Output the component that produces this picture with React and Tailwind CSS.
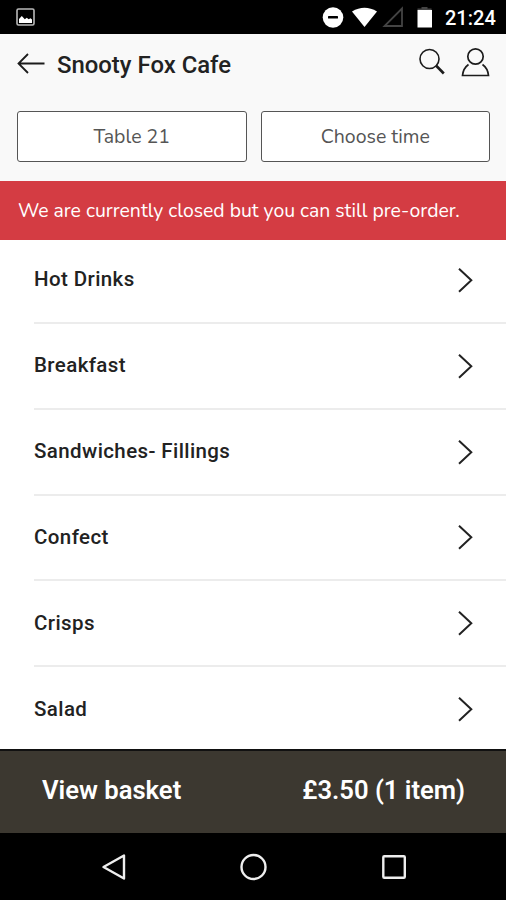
const categories = ['Hot Drinks', 'Breakfast', 'Sandwiches- Fillings', 'Confect', 'Crisps', 'Salad'];

function StatusBar() {
  return (
    <div className="h-[34px] shrink-0 bg-black text-white flex items-center pl-[16px] pr-[11px]">
      <svg width="19" height="18" viewBox="0 0 19 18" fill="none">
        <rect x="1" y="1" width="17" height="16" rx="1.5" stroke="#b9b9b9" strokeWidth="1.6" />
        <path d="M3 15V11l2.800-3 3 3.200 2-1.400 1.800 1.400 2-1 1.400 1.200v3.600z" fill="#fff" />
      </svg>
      <div className="flex-1" />
      <svg width="112" height="24" viewBox="0 0 112 24" className="shrink-0">
        <circle cx="12" cy="12.500" r="10.300" fill="#fff" />
        <rect x="7" y="11" width="10" height="2.600" rx="0.600" fill="#000" />
        <path d="M31 6.500Q43.500-1 56 6.500L43.500 22z" fill="#fff" />
        <path d="M63.500 21H81V3.500z" fill="none" stroke="#444" strokeWidth="1.800" />
        <path d="M96.500 5V3.500h4V2h6v1.500h4V5z" fill="#444" />
        <rect x="96.500" y="5" width="14.500" height="17.500" fill="#fff" />
      </svg>
      <span className="w-[50px] ml-[12px] text-[20px] leading-6 font-medium whitespace-nowrap pt-[2px]">21:24</span>
    </div>
  );
}

function Header() {
  return (
    <header className="h-[147px] shrink-0 bg-[#f9f9f9]">
      <div className="h-[60px] flex items-center pl-[17px] pr-[15px]">
        <svg width="28" height="24" viewBox="0 0 28 24" fill="none" stroke="#1c1c1c" strokeWidth="1.8" className="-mt-px">
          <path d="M27.500 11.500H1.500M11 2l-9.500 9.500 9.500 9.500" />
        </svg>
        <h1 className="ml-[12px] pt-[2px] text-[23.9px] leading-8 font-medium text-[#222] whitespace-nowrap">Snooty Fox Cafe</h1>
        <div className="flex-1" />
        <svg width="27" height="28" viewBox="0 0 27 28" fill="none" stroke="#1c1c1c" className="-mt-[4px]">
          <circle cx="10.500" cy="11" r="9.500" strokeWidth="1.600" />
          <path d="M17 17.500l7.800 8" strokeWidth="2.600" />
        </svg>
        <svg width="29" height="30" viewBox="0 0 29 30" fill="none" stroke="#1c1c1c" strokeWidth="1.700" className="ml-[15px] mr-px -mt-[4px]">
          <circle cx="14.500" cy="9.500" r="7.700" />
          <path d="M7.500 17.500C4 20 2 23.500 1.500 28.500h26C27 23.500 25 20 21.500 17.500" />
        </svg>
      </div>
      <div className="grid grid-cols-2 gap-[14px] pl-[17px] pr-[16px] pt-[17px] font-['Nunito','Lato',sans-serif] text-[19.5px] text-[#555]">
        <button className="h-[51px] bg-white border-[1.5px] border-[#555] rounded-[3px]">Table 21</button>
        <button className="h-[51px] bg-white border-[1.5px] border-[#555] rounded-[3px]">Choose time</button>
      </div>
    </header>
  );
}

function Category({ name }) {
  return (
    <li className="ml-[34px] pr-[33px] flex items-center justify-between border-b-2 border-[#ececec] last:border-transparent">
      <span className="pb-px text-[20.5px] leading-6 tracking-[0.4px] font-medium text-[#222] whitespace-nowrap">{name}</span>
      <svg width="15" height="26" viewBox="0 0 15 26" fill="none" stroke="#222" strokeWidth="2">
        <path d="M1 1.800L13.300 13.300 1 24.800" />
      </svg>
    </li>
  );
}

export default function App() {
  return (
    <div className="w-[506px] h-[900px] flex flex-col overflow-hidden bg-white font-['Roboto',sans-serif]">
      <StatusBar />
      <Header />
      <div className="h-[59px] shrink-0 bg-[#d43c43] text-white flex items-center pl-[18px] font-['Nunito','Lato',sans-serif] text-[19.4px] whitespace-nowrap">
        We are currently closed but you can still pre-order.
      </div>
      <ul className="h-[515px] -mt-[2px] shrink-0 grid auto-rows-fr">
        {categories.map(name => (
          <Category key={name} name={name} />
        ))}
      </ul>
      <div className="h-[84px] -mt-[4px] pb-[3px] shrink-0 bg-[#3c3830] border-t-2 border-[#111] text-white flex items-center justify-between pl-[42px] pr-[41px] text-[25.6px] font-semibold whitespace-nowrap">
        <span>View basket</span>
        <span>£3.50 (1 item)</span>
      </div>
      <nav className="flex-1 bg-black flex items-center justify-between pl-[101px] pr-[99px]">
        <svg width="26" height="28" viewBox="0 0 26 28" fill="none" stroke="#eee" strokeWidth="2.400">
          <path d="M23 2.500v23L2.500 14z" strokeLinejoin="round" />
        </svg>
        <svg width="28" height="28" viewBox="0 0 28 28" fill="none" stroke="#eee" strokeWidth="2.400">
          <circle cx="13.500" cy="14" r="12" />
        </svg>
        <svg width="26" height="26" viewBox="0 0 26 26" fill="none" stroke="#eee" strokeWidth="2.400">
          <rect x="2.300" y="2.300" width="21.500" height="21.500" rx="1" />
        </svg>
      </nav>
    </div>
  );
}
